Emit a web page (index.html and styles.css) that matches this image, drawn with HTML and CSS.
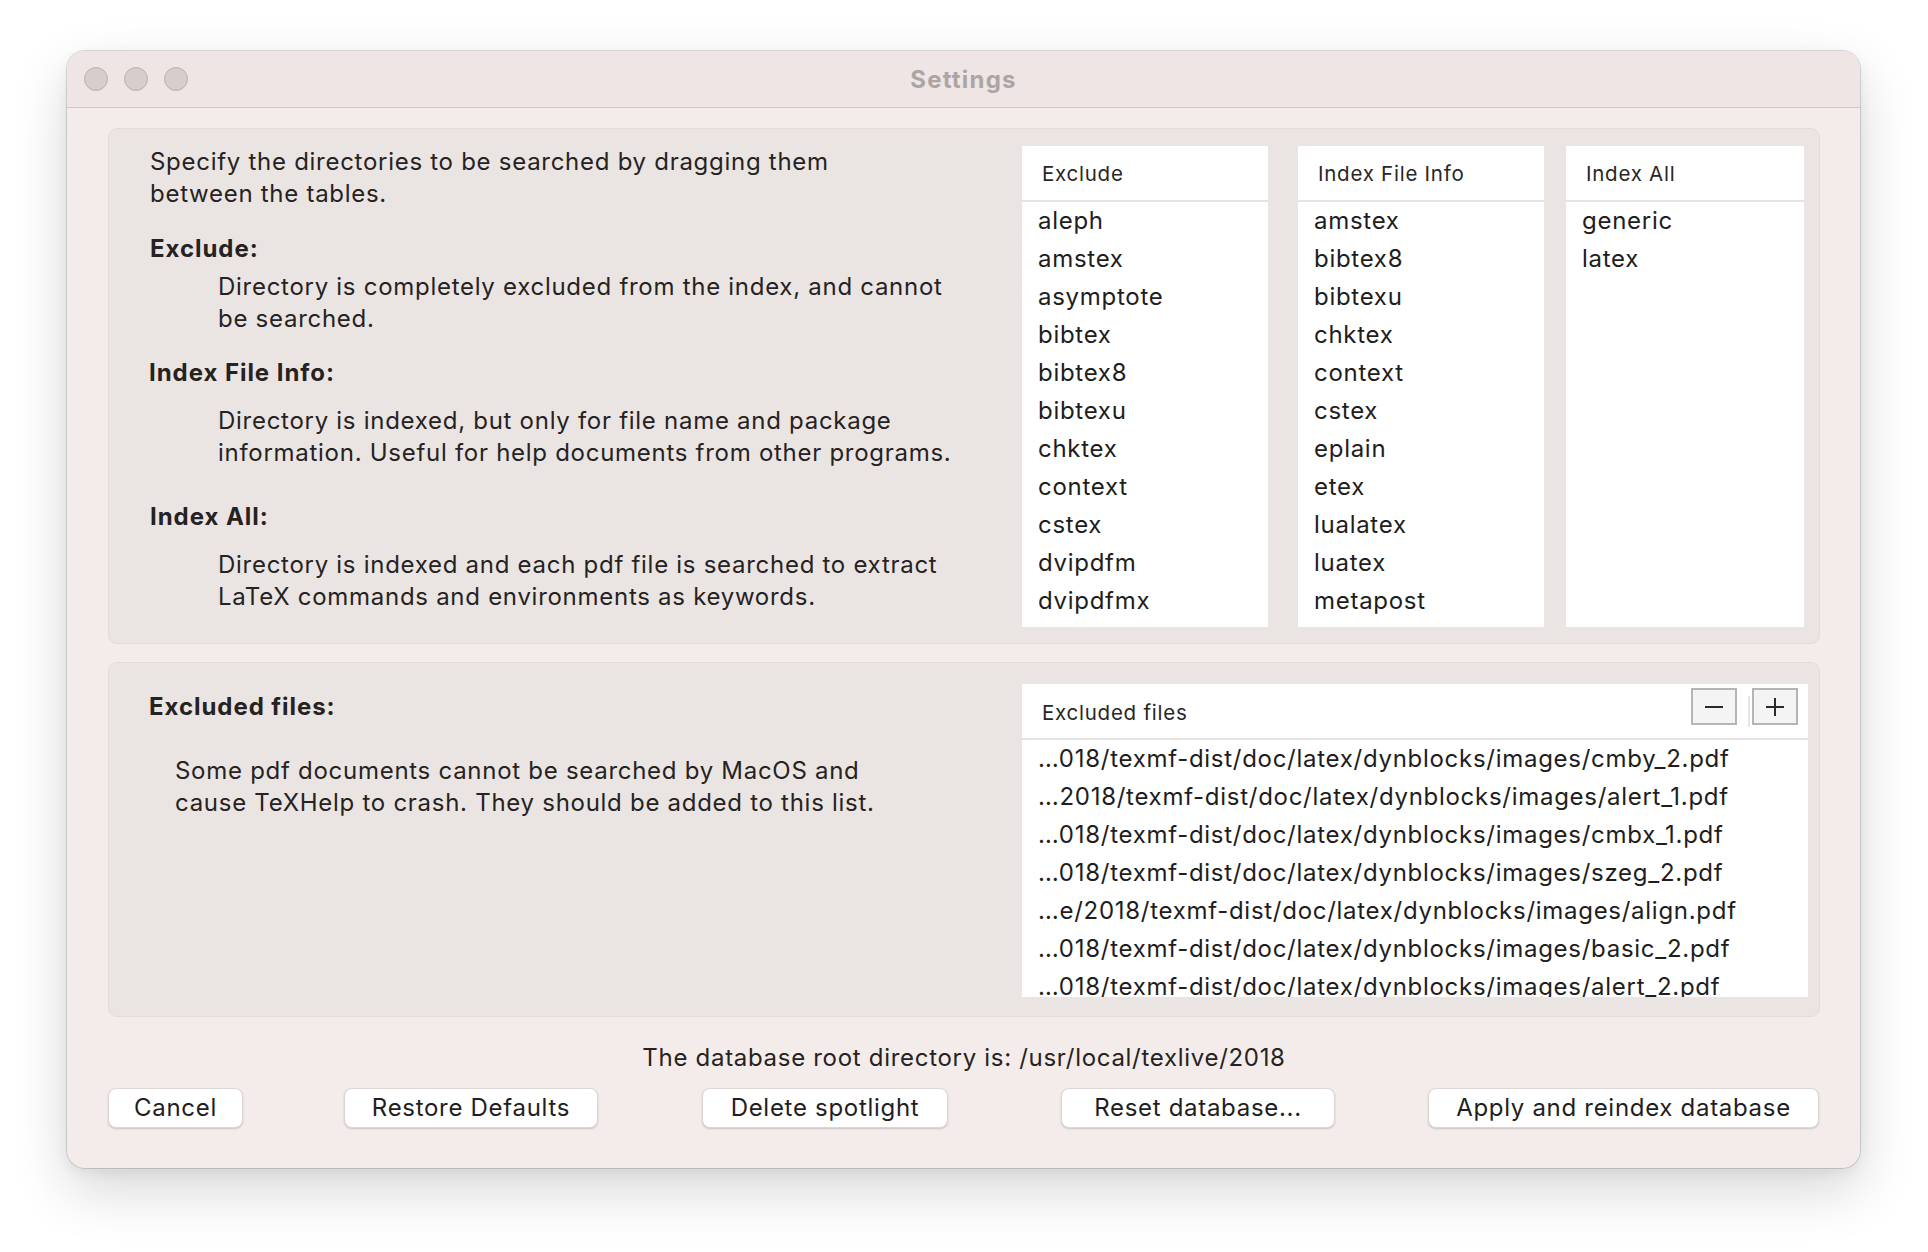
FILE: index.html
```html
<!DOCTYPE html>
<html lang="en">
<head>
<meta charset="utf-8">
<title>Settings</title>
<link rel="stylesheet" href="styles.css">
</head>
<body>
<div class="window">
  <div class="titlebar">
    <div class="lights">
      <span class="light"></span><span class="light"></span><span class="light"></span>
    </div>
    <div class="title">Settings</div>
  </div>
  <div class="content">
    <section class="group group-dirs">
      <div class="help">
        <p class="intro">Specify the directories to be searched by dragging them<br>between the tables.</p>
        <h3 class="label label-exclude">Exclude:</h3>
        <p class="desc desc-exclude">Directory is completely excluded from the index, and cannot<br>be searched.</p>
        <h3 class="label label-info">Index File Info:</h3>
        <p class="desc desc-info">Directory is indexed, but only for file name and package<br>information. Useful for help documents from other programs.</p>
        <h3 class="label label-all">Index All:</h3>
        <p class="desc desc-all">Directory is indexed and each pdf file is searched to extract<br>LaTeX commands and environments as keywords.</p>
      </div>
      <div class="tables">
        <div class="table table-exclude">
          <div class="thead">Exclude</div>
          <ul class="rows">
            <li>aleph</li><li>amstex</li><li>asymptote</li><li>bibtex</li><li>bibtex8</li><li>bibtexu</li><li>chktex</li><li>context</li><li>cstex</li><li>dvipdfm</li><li>dvipdfmx</li>
          </ul>
        </div>
        <div class="table table-info">
          <div class="thead">Index File Info</div>
          <ul class="rows">
            <li>amstex</li><li>bibtex8</li><li>bibtexu</li><li>chktex</li><li>context</li><li>cstex</li><li>eplain</li><li>etex</li><li>lualatex</li><li>luatex</li><li>metapost</li>
          </ul>
        </div>
        <div class="table table-all">
          <div class="thead">Index All</div>
          <ul class="rows">
            <li>generic</li><li>latex</li>
          </ul>
        </div>
      </div>
    </section>

    <section class="group group-files">
      <div class="help help-files">
        <h3 class="label label-files">Excluded files:</h3>
        <p class="desc desc-files">Some pdf documents cannot be searched by MacOS and<br>cause TeXHelp to crash. They should be added to this list.</p>
      </div>
      <div class="table table-files">
        <div class="thead thead-files">
          <span class="thead-label">Excluded files</span>
          <div class="tools">
            <button class="tool" aria-label="Remove">
              <svg width="22" height="22" viewBox="0 0 22 22"><path d="M2 11h18" stroke="#2a2a2a" stroke-width="2"/></svg>
            </button>
            <span class="tool-sep"></span>
            <button class="tool" aria-label="Add">
              <svg width="22" height="22" viewBox="0 0 22 22"><path d="M2 11h18M11 2v18" stroke="#2a2a2a" stroke-width="2"/></svg>
            </button>
          </div>
        </div>
        <ul class="rows rows-files">
          <li>…018/texmf-dist/doc/latex/dynblocks/images/cmby_2.pdf</li>
          <li>…2018/texmf-dist/doc/latex/dynblocks/images/alert_1.pdf</li>
          <li>…018/texmf-dist/doc/latex/dynblocks/images/cmbx_1.pdf</li>
          <li>…018/texmf-dist/doc/latex/dynblocks/images/szeg_2.pdf</li>
          <li>…e/2018/texmf-dist/doc/latex/dynblocks/images/align.pdf</li>
          <li>…018/texmf-dist/doc/latex/dynblocks/images/basic_2.pdf</li>
          <li>…018/texmf-dist/doc/latex/dynblocks/images/alert_2.pdf</li>
        </ul>
      </div>
    </section>

    <p class="root">The database root directory is: /usr/local/texlive/2018</p>

    <div class="buttons">
      <button class="btn btn-cancel">Cancel</button>
      <button class="btn btn-restore">Restore Defaults</button>
      <button class="btn btn-delete">Delete spotlight</button>
      <button class="btn btn-reset">Reset database...</button>
      <button class="btn btn-apply">Apply and reindex database</button>
    </div>
  </div>
</div>
</body>
</html>
```

FILE: styles.css
```css
* { box-sizing: border-box; }
h3, p, ul { margin: 0; }
html, body { margin: 0; padding: 0; background: #ffffff; }
body {
  font-family: "Inter", "Liberation Sans", sans-serif;
  color: #262222;
  padding: 51px 0 0 67px;
  width: 1928px;
  height: 1252px;
  overflow: hidden;
}

.window {
  width: 1793px;
  height: 1117px;
  background: #f4ecea;
  border-radius: 18px;
  box-shadow: 0 0 0 1px rgba(0,0,0,0.13), 0 22px 55px rgba(0,0,0,0.16), 0 4px 14px rgba(0,0,0,0.06);
  overflow: hidden;
  display: flex;
  flex-direction: column;
}

.titlebar {
  height: 57px;
  background: #eee5e4;
  border-bottom: 1px solid #cfc6c5;
  display: flex;
  align-items: center;
  position: relative;
  flex: none;
}
.lights { display: flex; gap: 16px; padding-left: 17px; }
.light {
  width: 24px; height: 24px; border-radius: 50%;
  background: #d6cdcc;
  border: 1px solid #b9b0af;
}
.title {
  position: absolute; left: 0; right: 0; top: 0; bottom: 0;
  display: flex; align-items: center; justify-content: center;
  font-weight: 700; font-size: 24px; letter-spacing: 1.2px; color: #aca5a5;
}

.content {
  flex: 1;
  padding: 20px 40px 40px 41px;
  display: flex;
  flex-direction: column;
}

.group {
  background: #eae5e3;
  border: 1px solid #e3dcda;
  border-radius: 9px;
  display: flex;
}
.group-dirs {
  height: 516px;
  padding: 17px 15px 0 41px;
  justify-content: space-between;
}
.group-files {
  height: 355px;
  margin-top: 18px;
  padding: 21px 11px 0 40px;
  justify-content: space-between;
}

.help { font-size: 24px; line-height: 32px; letter-spacing: 0.72px; }
.label { font-weight: 700; font-size: 24px; letter-spacing: 0.95px; }
.desc { margin-left: 68px; }
.label-exclude { margin-top: 23px; }
.desc-exclude { margin-top: 6px; }
.label-info { margin-top: 22px; margin-left: -1px; }
.desc-info { margin-top: 16px; }
.label-all { margin-top: 32px; }
.desc-all { margin-top: 16px; }

.help-files { padding-top: 7px; }
.desc-files { margin-top: 32px; margin-left: 26px; }

.tables { display: flex; height: 481px; }
.table { background: #ffffff; display: flex; flex-direction: column; overflow: hidden; }
.table-exclude { width: 246px; }
.table-info { width: 246px; margin-left: 30px; }
.table-all { width: 238px; margin-left: 22px; }

.thead {
  height: 56px;
  border-bottom: 2px solid #e4e4e4;
  font-size: 20.5px;
  letter-spacing: 0.75px;
  line-height: 54px;
  padding: 1px 0 0 20px;
  color: #2a2626;
  flex: none;
}
.rows { list-style: none; padding: 0; }
.rows li {
  height: 38px;
  line-height: 38px;
  font-size: 24px;
  letter-spacing: 0.72px;
  padding-left: 16px;
  white-space: nowrap;
  color: #211d1d;
}

.table-files { width: 786px; height: 313px; }
.thead-files {
  display: flex; align-items: flex-start; justify-content: space-between;
  padding: 0 10px 0 20px;
}
.thead-label { line-height: 54px; padding-top: 2px; }
.tools { display: flex; align-items: flex-start; padding-top: 4px; }
.tool {
  width: 46px; height: 37px;
  background: #f4f4f4;
  border: 2px solid #b5b5b5;
  padding: 0; margin: 0;
  display: flex; align-items: center; justify-content: center;
}
.tool-sep { width: 2px; height: 31px; background: #e6e6e6; margin: 8px 2px 0 11px; }

.root {
  margin-top: 25px;
  text-align: center;
  font-size: 24px;
  letter-spacing: 0.7px;
  line-height: 32px;
}

.buttons { display: flex; margin-top: 14px; }
.btn {
  height: 40px;
  background: #ffffff;
  border: 1px solid #ddd6d5;
  border-radius: 8px;
  box-shadow: 0 1px 2px rgba(0,0,0,0.18);
  font-family: "Inter", "Liberation Sans", sans-serif;
  font-size: 24px;
  letter-spacing: 0.7px;
  color: #221e1e;
  padding: 0 0 1px 0;
}
.btn-cancel { width: 135px; }
.btn-restore { width: 254px; margin-left: 101px; }
.btn-delete { width: 246px; margin-left: 104px; }
.btn-reset { width: 274px; margin-left: 113px; }
.btn-apply { width: 391px; margin-left: 93px; }
```
